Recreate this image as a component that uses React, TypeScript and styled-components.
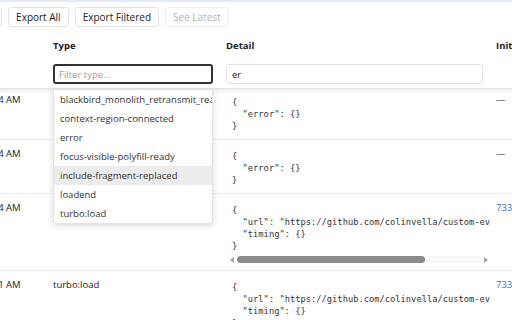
import React from "react";
import styled, { createGlobalStyle } from "styled-components";

const GlobalStyle = createGlobalStyle`
  html, body {
    margin: 0;
    padding: 0;
    background: #fff;
    overflow: hidden;
  }
  body {
    font-family: "Open Sans", "Noto Sans", sans-serif;
    font-size: 9.5px;
    color: #222;
  }
`;

const COLUMNS = "87px 173px 270px 120px";

type LogRow = {
  time: string;
  type: string;
  detail: string;
  initiator: string | null;
  thumb?: number;
};

const urlDetail = `{
  "url": "https://github.com/colinvella/custom-event-monitor/",
  "timing": {}
}`;

const errorDetail = `{
  "error": {}
}`;

const ROWS: LogRow[] = [
  { time: "10:42:54 AM", type: "error", detail: errorDetail, initiator: null },
  { time: "10:42:54 AM", type: "error", detail: errorDetail, initiator: null },
  { time: "10:42:54 AM", type: "turbo:load", detail: urlDetail, initiator: "7330d4f2.js:1", thumb: 77 },
  { time: "10:42:51 AM", type: "turbo:load", detail: urlDetail, initiator: "7330d4f2.js:1" },
];

const SUGGESTIONS = [
  "blackbird_monolith_retransmit_react",
  "context-region-connected",
  "error",
  "focus-visible-polyfill-ready",
  "include-fragment-replaced",
  "loadend",
  "turbo:load",
];

const App: React.FC = () => {
  return (
    <>
      <GlobalStyle />
      <Viewport>
        <Page>
          <Toolbar>
            <Button>Clear</Button>
            <Button>Export All</Button>
            <Button>Export Filtered</Button>
            <Button disabled>See Latest</Button>
          </Toolbar>
          <HeaderRow>
            <HeadCell>
              <HeadLabel>Time</HeadLabel>
            </HeadCell>
            <HeadCell>
              <HeadLabel>Type</HeadLabel>
              <FilterInput $focused $width={160} placeholder="Filter type..." readOnly />
              <Suggestions>
                {SUGGESTIONS.map((s, idx) => (
                  <Suggestion key={idx.toString()} $active={s === "include-fragment-replaced"}>
                    {s}
                  </Suggestion>
                ))}
              </Suggestions>
            </HeadCell>
            <HeadCell>
              <HeadLabel>Detail</HeadLabel>
              <FilterInput $width={257} defaultValue="er" readOnly />
            </HeadCell>
            <HeadCell>
              <HeadLabel>Initiator</HeadLabel>
            </HeadCell>
          </HeaderRow>
          {ROWS.map((el, idx) => (
            <Row key={idx.toString()}>
              <Cell>{el.time}</Cell>
              <Cell>{el.type}</Cell>
              <DetailCell>
                <Pre>{el.detail}</Pre>
                {el.thumb !== undefined && (
                  <ScrollBar>
                    <Arrow $dir="left" />
                    <Track>
                      <Thumb $ratio={el.thumb} />
                    </Track>
                    <Arrow $dir="right" />
                  </ScrollBar>
                )}
              </DetailCell>
              <Cell>
                {el.initiator ? <Link>{el.initiator}</Link> : "—"}
              </Cell>
            </Row>
          ))}
        </Page>
      </Viewport>
    </>
  );
};

const Viewport = styled.div`
  width: 512px;
  height: 320px;
  overflow: hidden;
  box-sizing: border-box;
  border-top: 2px solid #e2eaf8;
`;

const Page = styled.div`
  margin-left: -40px;
  width: 700px;
`;

const Toolbar = styled.div`
  display: flex;
  gap: 6px;
  padding: 5px 0 7px 2px;
`;

const Button = styled.button`
  height: 20px;
  padding: 0 7px;
  border: 1px solid #e3e3e3;
  border-radius: 3px;
  background: #fff;
  font-family: inherit;
  font-size: 10px;
  color: #222;
  line-height: 18px;

  &:disabled {
    color: #b4b4b4;
    border-color: #efefef;
  }
`;

const HeaderRow = styled.div`
  display: grid;
  grid-template-columns: ${COLUMNS};
  position: relative;
  z-index: 2;
  margin-bottom: -3px;
  background: #fff;
  border-bottom: 1px solid #e6e6e6;
  box-shadow: 0 2px 4px rgba(0, 0, 0, 0.09);
`;

const HeadCell = styled.div`
  position: relative;
  display: flex;
  flex-direction: column;
  gap: 11px;
  padding: 5px 6px 4px;
`;

const HeadLabel = styled.div`
  font-weight: 700;
  line-height: 14px;
  white-space: nowrap;
`;

const FilterInput = styled.input<{ $focused?: boolean; $width: number }>`
  box-sizing: border-box;
  width: ${(p) => p.$width}px;
  height: 20px;
  padding: 0 ${(p) => (p.$focused ? 4 : 5)}px;
  border: ${(p) => (p.$focused ? "2px solid #333" : "1px solid #e2e2e2")};
  border-radius: 3px;
  outline: none;
  font-family: inherit;
  font-size: 9.5px;
  color: #222;

  &::placeholder {
    color: #a0a0a0;
  }
`;

const Suggestions = styled.div`
  position: absolute;
  top: calc(100% + 1px);
  left: 6px;
  width: 160px;
  box-sizing: border-box;
  background: #fff;
  border: 1px solid #e4e4e4;
  border-radius: 0 0 3px 3px;
  box-shadow: 0 2px 6px rgba(0, 0, 0, 0.14);
  z-index: 3;
`;

const Suggestion = styled.div<{ $active?: boolean }>`
  height: 19px;
  line-height: 19px;
  padding: 0 6px;
  white-space: nowrap;
  overflow: hidden;
  color: #333;
  background: ${(p) => (p.$active ? "#ececec" : "transparent")};
`;

const Row = styled.div`
  display: grid;
  grid-template-columns: ${COLUMNS};
  border-bottom: 1px solid #ededed;
`;

const Cell = styled.div`
  padding: 6px 6px;
  line-height: 15px;
  white-space: nowrap;
  overflow: hidden;
`;

const DetailCell = styled.div`
  min-width: 0;
  padding: 10px 0 7px 8px;
  overflow: hidden;
`;

const Link = styled.span`
  color: #3b6fd6;
`;

const Pre = styled.pre`
  margin: 0;
  padding-left: 4px;
  font-family: "DejaVu Sans Mono", monospace;
  font-size: 8.75px;
  line-height: 12px;
  color: #333;
  overflow: hidden;
`;

const ScrollBar = styled.div`
  display: flex;
  align-items: center;
  gap: 3px;
  height: 7px;
  margin-top: 4px;
  padding: 0 2px;
`;

const Arrow = styled.div<{ $dir: "left" | "right" }>`
  width: 0;
  height: 0;
  border-top: 3px solid transparent;
  border-bottom: 3px solid transparent;
  ${(p) => (p.$dir === "left" ? "border-right: 4px solid #a3a3a3;" : "border-left: 4px solid #a3a3a3;")}
`;

const Track = styled.div`
  flex: 1;
  height: 7px;
  border-radius: 4px;
  background: #f7f7f7;
`;

const Thumb = styled.div<{ $ratio: number }>`
  width: ${(p) => p.$ratio}%;
  height: 100%;
  border-radius: 4px;
  background: #8a8a8a;
`;

export default App;
